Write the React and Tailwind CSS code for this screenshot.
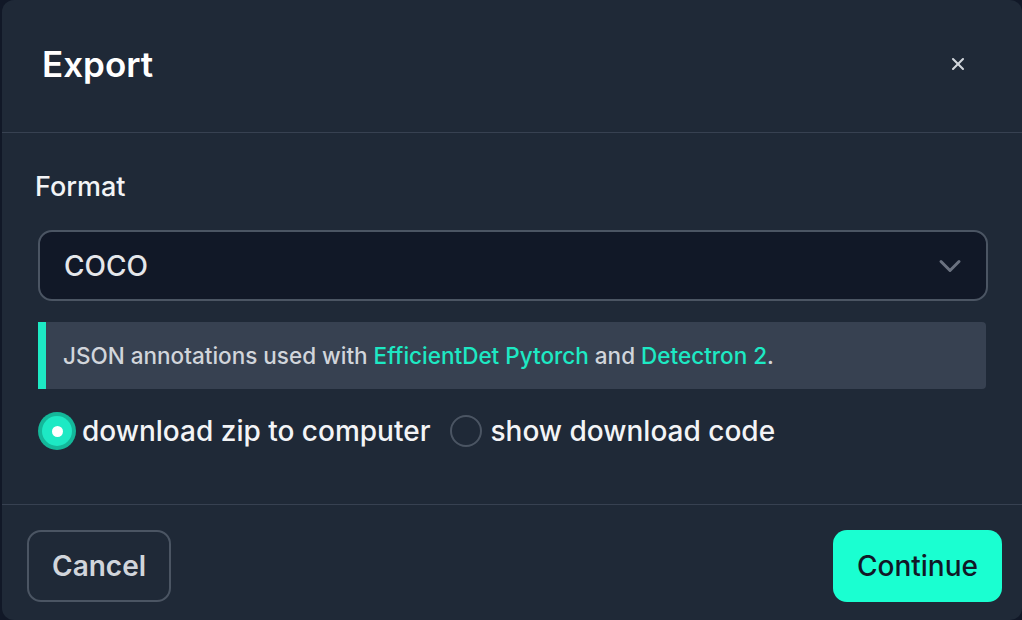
import { X, ChevronDown } from 'lucide-react';

const App = () => {
  return (
    <div className="w-full h-[620px] bg-[#111827] pl-[2px] overflow-hidden" style={{ fontFamily: 'Inter, "Noto Sans", sans-serif' }}>
      <div className="h-full flex flex-col bg-[#1f2937] rounded-[12px]">
        {/* header */}
        <div className="h-[133px] flex items-center justify-between pl-[40px] pr-[54px] pb-[4px] border-b border-[#374151]">
          <h2 className="text-[35px] font-semibold leading-none text-white">Export</h2>
          <button className="text-[#d1d5db]" aria-label="Close">
            <X size={20} strokeWidth={2.5} />
          </button>
        </div>

        {/* body */}
        <div className="flex-1 pl-[36px] pr-[34px] pt-[37px] border-b border-[#374151]">
          <label className="block text-[27px] font-medium leading-[34px] text-[#f3f4f6] -ml-[3px]">Format</label>

          <div className="mt-[26px] h-[71px] flex items-center justify-between pl-[24px] pr-[18px] bg-[#111827] border-2 border-[#4b5563] rounded-[14px]">
            <span className="text-[28px] font-medium text-[#e5e7eb]">COCO</span>
            <ChevronDown size={36} strokeWidth={2} className="text-[#6b7280]" />
          </div>

          <div className="mt-[21px] h-[67px] mr-[2px] flex items-center pl-[17px] bg-[#374151] border-l-[8px] border-[#1de9c4] rounded-r-[4px]">
            <p className="text-[22.5px] font-medium text-[#d1d5db]">
              JSON annotations used with <span className="text-[#1de9c4]">EfficientDet Pytorch</span> and{' '}
              <span className="text-[#1de9c4]">Detectron 2</span>.
            </p>
          </div>

          <div className="mt-[21px] flex items-center">
            <label className="flex items-center">
              <span className="w-[38px] h-[38px] rounded-full bg-[#14b89a] flex items-center justify-center">
                <span className="w-[30px] h-[30px] rounded-full bg-[#1de9c4] flex items-center justify-center">
                  <span className="w-[11px] h-[11px] rounded-full bg-white" />
                </span>
              </span>
              <span className="ml-[6px] text-[28px] font-medium text-[#f3f4f6]">download zip to computer</span>
            </label>
            <label className="flex items-center ml-[20px]">
              <span className="w-[32px] h-[32px] rounded-full border-2 border-[#4b5563]" />
              <span className="ml-[8px] text-[28px] font-medium text-[#f3f4f6]">show download code</span>
            </label>
          </div>
        </div>

        {/* footer */}
        <div className="h-[115px] flex items-start justify-between pl-[25px] pr-[20px] pt-[25px]">
          <button className="h-[72px] px-[23px] border-2 border-[#4b5563] rounded-[14px] text-[28px] font-semibold text-[#d1d5db]">
            Cancel
          </button>
          <button className="h-[72px] px-[24px] bg-[#1affd1] rounded-[14px] text-[28px] font-medium text-[#111827]">
            Continue
          </button>
        </div>
      </div>
    </div>
  );
};

export default App;
